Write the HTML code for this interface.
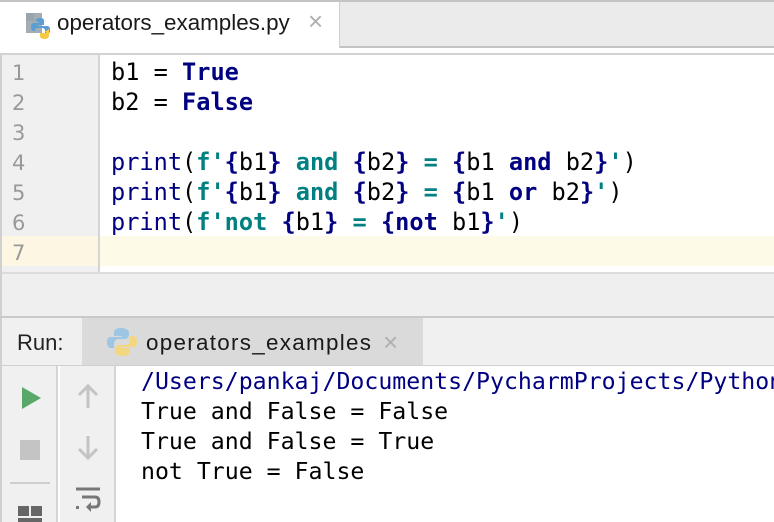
<!DOCTYPE html>
<html><head><style>
*{margin:0;padding:0;box-sizing:border-box}
html,body{width:774px;height:522px;overflow:hidden}
body{background:#fff;position:relative;font-family:"Liberation Sans",sans-serif}
.a{position:absolute}
.mono{font-family:"DejaVu Sans Mono","Liberation Mono",monospace;font-size:23.6px;white-space:pre;overflow:hidden}
.kw{color:#000080;font-weight:bold}
.n{color:#000080}
.s{color:#008080;font-weight:bold}
.ln{color:#999;font-size:21px;font-family:"DejaVu Sans","Liberation Sans",sans-serif}
.x{font-size:26px;color:#b0b0b0;font-weight:300}
</style></head><body>
<div class="a" style="left:0;top:0;width:774px;height:2px;background:#c4c4c4"></div>
<div class="a" style="left:0;top:2px;width:774px;height:44px;background:#ebebeb"></div>
<div class="a" style="left:0;top:2px;width:340px;height:46px;background:#fff;border-right:1px solid #d0d0d0"></div>
<div class="a" style="left:340px;top:46px;width:434px;height:2px;background:#c4c4c4"></div>
<div class="a" style="left:0;top:53px;width:774px;height:2px;background:#d2d2d2"></div>
<svg class="a" style="left:22px;top:9px" width="30" height="32" viewBox="0 0 30 32">
<path d="M4 4h8v8H4z" fill="#9aa4ab"/><path d="M4 12h8V4l8 0v20H4z" fill="#9aa4ab" opacity=".9"/>
<path d="M14 12c0-2 1-3 4-3s4 1 4 3v4h-6v1h9c2 0 3 1 3 4s-1 4-3 4h-2v-3c0-2-1-3-3-3h-4c-2 0-3 1-3 3v0h-1c-2 0-3-1-3-4s1-4 3-4h6z" fill="#5a9fd4"/>
<path d="M27 20v6c0 2-1 4-4 4s-5-1-5-3v-3h6v-1h-2z" fill="#f7c842"/>
</svg>
<div class="a" style="left:57px;top:10px;font-size:22.4px;color:#1a1a1a">operators_examples.py</div>
<div class="a x" style="left:308px;top:6px">×</div>
<div class="a" style="left:0;top:55px;width:2px;height:217px;background:#d0d0d0"></div>
<div class="a" style="left:2px;top:55px;width:96px;height:217px;background:#f0f0f0"></div>
<div class="a" style="left:98px;top:55px;width:2px;height:217px;background:#d5d5d5"></div>
<div class="a" style="left:2px;top:236px;width:96px;height:30px;background:#fdf6e3"></div>
<div class="a" style="left:100px;top:236px;width:674px;height:30px;background:#fefae8"></div>
<div class="a ln" style="left:12px;top:58px;line-height:30px">1<br>2<br>3<br>4<br>5<br>6<br>7</div>
<div class="a mono" style="left:111px;top:57px;width:663px;line-height:30px;color:#000">b1 = <span class="kw">True</span>
b2 = <span class="kw">False</span>

<span class="n">print</span>(<span class="s">f'</span><span class="kw">{</span>b1<span class="kw">}</span><span class="s"> and </span><span class="kw">{</span>b2<span class="kw">}</span><span class="s"> = </span><span class="kw">{</span>b1 <span class="kw">and</span> b2<span class="kw">}</span><span class="s">'</span>)
<span class="n">print</span>(<span class="s">f'</span><span class="kw">{</span>b1<span class="kw">}</span><span class="s"> and </span><span class="kw">{</span>b2<span class="kw">}</span><span class="s"> = </span><span class="kw">{</span>b1 <span class="kw">or</span> b2<span class="kw">}</span><span class="s">'</span>)
<span class="n">print</span>(<span class="s">f'not </span><span class="kw">{</span>b1<span class="kw">}</span><span class="s"> = </span><span class="kw">{not</span> b1<span class="kw">}</span><span class="s">'</span>)</div>
<div class="a" style="left:0;top:272px;width:774px;height:44px;background:#efefef;border-top:2px solid #dcdcdc"></div>
<div class="a" style="left:0;top:272px;width:2px;height:250px;background:#d0d0d0"></div>
<div class="a" style="left:0;top:316px;width:774px;height:2px;background:#c9c9c9"></div>
<div class="a" style="left:2px;top:318px;width:772px;height:48px;background:#f0f0f0"></div>
<div class="a" style="left:82px;top:318px;width:341px;height:48px;background:#dadada"></div>
<div class="a" style="left:17px;top:330px;font-size:22px;color:#222">Run:</div>
<svg class="a" style="left:107px;top:327px" width="30" height="30" viewBox="0 0 30 30">
<path d="M14 1c-5 0-7 2-7 5v3h8v1H4c-3 0-4 2-4 5s1 6 4 6h3v-4c0-3 2-5 5-5h6c2 0 4-2 4-4V6c0-3-3-5-8-5z" fill="#9cc6e2"/>
<path d="M16 29c5 0 7-2 7-5v-3h-8v-1h11c3 0 4-2 4-5s-1-6-4-6h-3v4c0 3-2 5-5 5h-6c-2 0-4 2-4 4v2c0 3 3 5 8 5z" fill="#f2d780"/>
</svg>
<div class="a" style="left:146px;top:330px;font-size:22.4px;color:#1a1a1a;letter-spacing:1.3px">operators_examples</div>
<div class="a x" style="left:383px;top:327px">×</div>
<div class="a" style="left:2px;top:365px;width:772px;height:1px;background:#d0d0d0"></div>
<div class="a" style="left:2px;top:366px;width:56px;height:156px;background:#f0f0f0;border-right:2px solid #d5d5d5"></div>
<div class="a" style="left:60px;top:366px;width:56px;height:156px;background:#f0f0f0;border-right:2px solid #d5d5d5"></div>
<svg class="a" style="left:20px;top:385px" width="24" height="26"><path d="M2 2L21 13 2 24z" fill="#59a869"/></svg>
<div class="a" style="left:20px;top:440px;width:20px;height:20px;background:#c4c4c4"></div>
<div class="a" style="left:10px;top:482px;width:40px;height:2px;background:#cfcfcf"></div>
<div class="a" style="left:18px;top:506px;width:11px;height:10px;background:#666"></div>
<div class="a" style="left:31px;top:506px;width:11px;height:10px;background:#666"></div>
<div class="a" style="left:18px;top:518px;width:24px;height:4px;background:#666"></div>
<svg class="a" style="left:76px;top:382px" width="24" height="30"><path d="M12 26V4M3 13l9-9 9 9" stroke="#c4c4c4" stroke-width="3" fill="none"/></svg>
<svg class="a" style="left:76px;top:432px" width="24" height="30"><path d="M12 4v22M3 17l9 9 9-9" stroke="#c4c4c4" stroke-width="3" fill="none"/></svg>
<svg class="a" style="left:74px;top:486px" width="28" height="32"><path d="M2 3h24M8 11h13c3 0 4 2 4 5s-1 5-4 5h-6" stroke="#777" stroke-width="3" fill="none"/><path d="M17 16l-5 5 5 5z" fill="#777"/><rect x="2" y="20" width="3" height="3" fill="#777"/></svg>
<div class="a mono" style="left:141px;top:367px;width:633px;line-height:30px;font-size:23.2px;color:#000"><span style="color:#000080">/Users/pankaj/Documents/PycharmProjects/PythonTutorials</span>
True and False = False
True and False = True
not True = False</div>
</body></html>
